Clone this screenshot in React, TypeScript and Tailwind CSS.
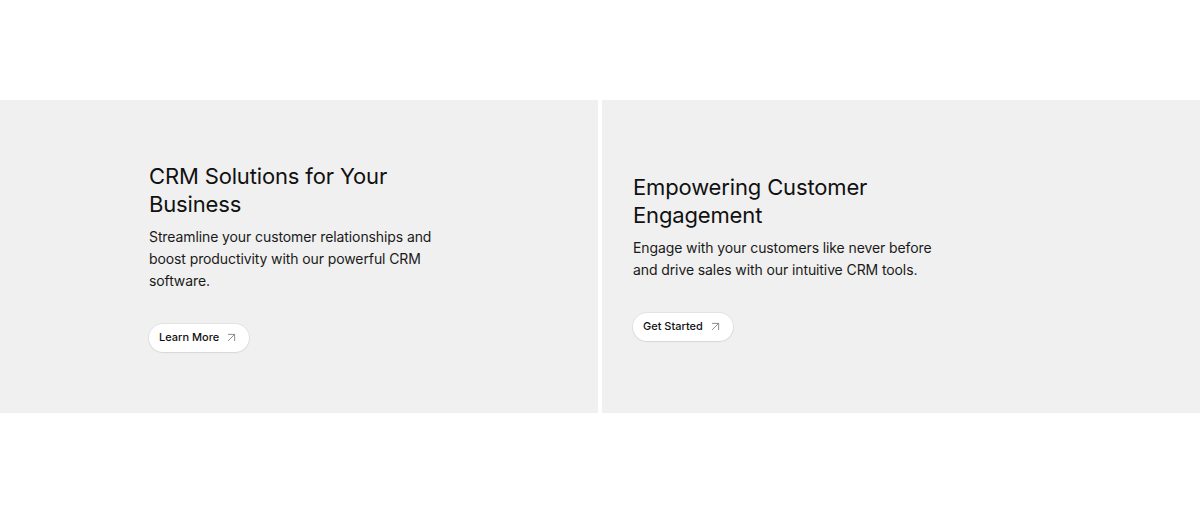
import { ArrowUpRight } from 'lucide-react';

type Slide = {
  title: string;
  text: string;
  cta: string;
};

const slides: Slide[] = [
  {
    title: 'CRM Solutions for Your Business',
    text: 'Streamline your customer relationships and boost productivity with our powerful CRM software.',
    cta: 'Learn More',
  },
  {
    title: 'Empowering Customer Engagement',
    text: 'Engage with your customers like never before and drive sales with our intuitive CRM tools.',
    cta: 'Get Started',
  },
];

const SlideContent = ({ slide }: { slide: Slide }) => (
  <div className="w-[310px]">
    <h2 className="text-[22px] leading-7 font-normal text-[#111111] tracking-[-0.15px]">{slide.title}</h2>
    <p className="mt-2 text-[14px] leading-[22px] text-[#1a1a1a] tracking-[-0.1px]">{slide.text}</p>
    <button className="mt-8 flex h-7 items-center gap-[5px] rounded-full bg-white pl-2.5 pr-2.5 text-[11px] font-medium text-[#111111] shadow-[0_0_0_1px_rgba(0,0,0,0.05),0_1px_2px_rgba(0,0,0,0.06)]">
      {slide.cta}
      <ArrowUpRight size={15} strokeWidth={1.5} className="text-[#888888]" />
    </button>
  </div>
);

export default function App() {
  return (
    <div className="min-h-screen bg-white font-['Inter','Liberation_Sans',sans-serif]">
      <div className="pt-[100px]">
        <div className="grid h-[313px] grid-cols-2 gap-1">
          <section className="flex items-center bg-[#f0f0f0] pl-[149px]">
            <SlideContent slide={slides[0]} />
          </section>
          <section className="flex items-center bg-[#f0f0f0] pl-[31px]">
            <SlideContent slide={slides[1]} />
          </section>
        </div>
      </div>
    </div>
  );
}
